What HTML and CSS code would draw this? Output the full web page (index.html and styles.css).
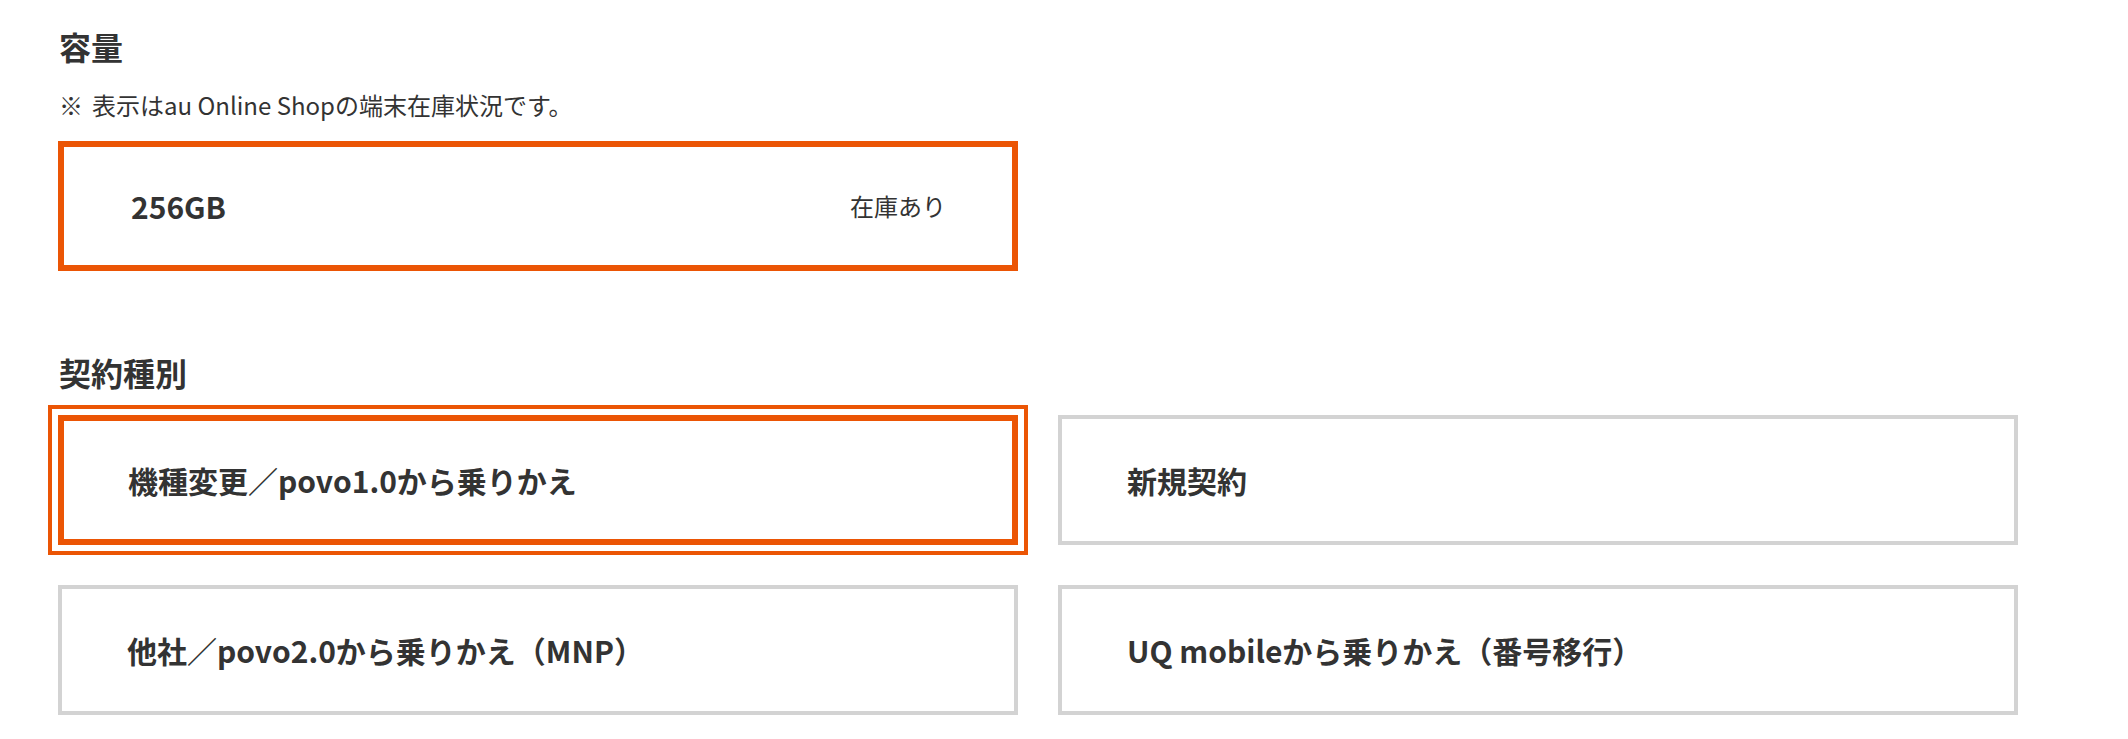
FILE: index.html
```html
<!DOCTYPE html>
<html lang="ja">
<head>
<meta charset="utf-8">
<title>容量・契約種別</title>
<link rel="stylesheet" href="styles.css">
</head>
<body>
<main class="page">
  <section class="section section--capacity">
    <h2 class="section-title">容量</h2>
    <p class="section-note"><span class="note-mark">※</span>表示はau Online Shopの端末在庫状況です。</p>
    <ul class="option-grid">
      <li class="option option--selected option--capacity">
        <span class="option-label">256GB</span>
        <span class="option-stock">在庫あり</span>
      </li>
    </ul>
  </section>

  <section class="section section--contract">
    <h2 class="section-title">契約種別</h2>
    <ul class="option-grid">
      <li class="option option--selected option--focused">
        <span class="option-label">機種変更／povo1.0から乗りかえ</span>
      </li>
      <li class="option">
        <span class="option-label">新規契約</span>
      </li>
      <li class="option">
        <span class="option-label">他社／povo2.0から乗りかえ（MNP）</span>
      </li>
      <li class="option">
        <span class="option-label">UQ mobileから乗りかえ（番号移行）</span>
      </li>
    </ul>
  </section>
</main>
</body>
</html>
```

FILE: styles.css
```css
* {
  box-sizing: border-box;
}

html, body {
  margin: 0;
  padding: 0;
  background: #ffffff;
}

body {
  font-family: "Noto Sans CJK JP", "Noto Sans", sans-serif;
  color: #333333;
}

.page {
  padding: 22px 58px 0 58px;
}

.section--contract {
  margin-top: 77px;
}

.section-title {
  margin: 0 0 19px 0;
  font-size: 32px;
  line-height: 48px;
  font-weight: 700;
  padding-left: 1px;
}

.section--capacity .section-title {
  margin-bottom: 18px;
}

.section-note {
  margin: 0 0 20px 0;
  font-size: 24px;
  line-height: 33px;
  padding-left: 1px;
}

.note-mark {
  margin-right: 9px;
}

.option-grid {
  list-style: none;
  margin: 0;
  padding: 0;
  display: grid;
  grid-template-columns: 960px 960px;
  column-gap: 40px;
  row-gap: 40px;
}

.option {
  height: 130px;
  border: 4px solid #d3d3d3;
  background: #ffffff;
  display: flex;
  align-items: center;
  justify-content: space-between;
  padding: 0 68px 0 65px;
}

.option--selected {
  border: 6px solid #eb5505;
  padding-left: 64px;
}

.option--capacity {
  padding-left: 67px;
  padding-right: 66px;
}

.option--focused {
  outline: 4px solid #eb5505;
  outline-offset: 6px;
}

.option-label {
  font-size: 30px;
  line-height: 44px;
  font-weight: 700;
}

.option-stock {
  font-size: 24px;
  line-height: 34px;
  font-weight: 400;
}
```
